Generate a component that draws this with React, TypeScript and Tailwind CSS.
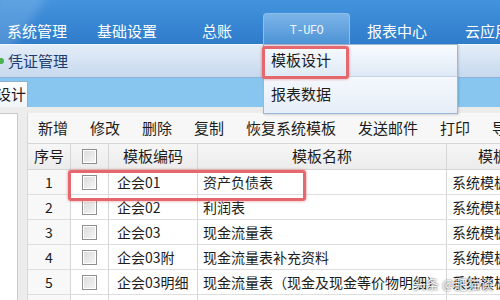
import React from 'react';

const navItems = [
  { label: '系统管理', ml: 'ml-[7px]' },
  { label: '基础设置', ml: 'ml-[30px]' },
  { label: '总账', ml: 'ml-[45px]' },
];

const tools = ['新增', '修改', '删除', '复制', '恢复系统模板', '发送邮件', '打印', '导出'];

const rows = [
  ['1', '企会01', '资产负债表', '系统模板'],
  ['2', '企会02', '利润表', '系统模板'],
  ['3', '企会03', '现金流量表', '系统模板'],
  ['4', '企会03附', '现金流量表补充资料', '系统模板'],
  ['5', '企会03明细', '现金流量表（现金及现金等价物明细）', '系统模板'],
  ['6', '企会04', '所有者权益变动表（新准则）', '系统模板'],
];

function CheckBox() {
  return (
    <div className="w-[15px] h-[15px] border border-[#8e8e8e] bg-white p-[1px]">
      <div className="w-full h-full bg-gradient-to-br from-[#dcdcdc] to-[#f4f4f4]" />
    </div>
  );
}

export default function App() {
  return (
    <div className="relative w-[500px] h-[300px] overflow-hidden bg-[#ececec] font-['Noto_Sans_CJK_SC','Microsoft_YaHei',sans-serif] text-[15px] text-[#1c1c1c]">
      {/* Top nav */}
      <div className="relative h-[44px] bg-gradient-to-b from-[#4393dd] to-[#2f7ccb] flex items-end overflow-hidden whitespace-nowrap">
        <div className="absolute -left-[10px] -top-[20px] w-[40px] h-[70px] rotate-[35deg] bg-white/15 blur-[4px]" />
        {navItems.map((n) => (
          <div key={n.label} className={`${n.ml} shrink-0 h-[32px] pt-[4px] flex items-center text-white leading-none`}>
            {n.label}
          </div>
        ))}
        <div className="ml-[31px] shrink-0 w-[87px] h-[31px] pt-[11px] rounded-t-[4px] border border-b-0 border-[#8cc0ec] bg-gradient-to-b from-[#7bb4e8] to-[#4d93d6] flex items-start justify-center">
          <span className="font-['Liberation_Mono',monospace] text-[12px] leading-none text-[#eef4fb] tracking-[-0.5px]">T-UFO</span>
        </div>
        <div className="ml-[17px] shrink-0 h-[32px] pt-[4px] flex items-center text-white leading-none">报表中心</div>
        <div className="ml-[38px] shrink-0 h-[32px] pt-[4px] flex items-center text-white leading-none">云应用</div>
      </div>

      {/* Module strip */}
      <div className="h-[34px] bg-gradient-to-b from-[#e4edf7] to-[#c6d9ee] border-t border-[#f2f7fc] border-b border-b-[#8fb0d4] flex items-center">
        <div className="w-[6px] h-[6px] shrink-0 rounded-full bg-[#4caf50] -ml-[2px]" />
        <span className="ml-[4px] text-[#1d3b6e]">凭证管理</span>
      </div>

      {/* Tab strip */}
      <div className="h-[29px] bg-[#88c6ef] flex items-end">
        <div className="w-[28px] h-[26px] bg-gradient-to-b from-white to-[#f1f5f9] border border-b-0 border-l-0 border-[#8fb2d2] flex items-center justify-end pr-[1px] overflow-hidden">
          <span className="whitespace-nowrap">设计</span>
        </div>
      </div>

      {/* Content */}
      <div className="flex pt-[6px] h-[193px]">
        <div className="w-[18px] shrink-0 bg-white border-t border-r border-[#c9c9c9]" />
        <div className="ml-[9px] flex-1 min-w-0 bg-white border-l border-[#d8d8d8] flex flex-col">
          {/* Toolbar */}
          <div className="h-[30px] shrink-0 bg-[#f7f7f7] flex items-center pl-[10px] gap-[22px] whitespace-nowrap">
            {tools.map((t) => (
              <span key={t} className="shrink-0">{t}</span>
            ))}
          </div>

          {/* Grid header */}
          <div className="grid shrink-0 grid-cols-[43px_38px_89px_249px_1fr] h-[27px] bg-gradient-to-b from-[#f6f6f6] to-[#ececec] border-t border-b border-[#d6d6d6]">
            <div className="flex items-center justify-center border-r border-[#d6d6d6]">序号</div>
            <div className="flex items-center justify-center border-r border-[#d6d6d6]">
              <CheckBox />
            </div>
            <div className="flex items-center justify-center border-r border-[#d6d6d6]">模板编码</div>
            <div className="flex items-center justify-center border-r border-[#d6d6d6]">模板名称</div>
            <div className="flex items-center pl-[31px] whitespace-nowrap overflow-hidden">模板类型</div>
          </div>

          {/* Rows */}
          {rows.map((r) => (
            <div
              key={r[0]}
              className="grid grid-cols-[43px_38px_89px_249px_1fr] h-[25px] shrink-0 border-b border-[#dedede] text-[14px]"
            >
              <div className="flex items-center justify-center border-r border-[#d6d6d6] bg-[#f8f8f8]">{r[0]}</div>
              <div className="flex items-center justify-center border-r border-[#d6d6d6]">
                <CheckBox />
              </div>
              <div className="flex items-center pl-[8px] border-r border-[#d6d6d6] whitespace-nowrap overflow-hidden">{r[1]}</div>
              <div className="flex items-center pl-[5px] border-r border-[#d6d6d6] whitespace-nowrap overflow-hidden">{r[2]}</div>
              <div className="flex items-center pl-[5px] whitespace-nowrap overflow-hidden">{r[3]}</div>
            </div>
          ))}
        </div>
      </div>

      {/* Dropdown menu */}
      <div className="absolute left-[263px] top-[44px] w-[195px] h-[70px] border border-[#9db7d6] bg-[#eef3f9] shadow-[1px_1px_2px_rgba(0,0,0,0.15)] flex flex-col">
        <div className="h-[32px] bg-gradient-to-b from-[#f8fbfe] to-[#dfeaf6] border-b border-[#c3d4e8] flex items-center pl-[7px]">模板设计</div>
        <div className="flex-1 pb-[2px] bg-gradient-to-b from-[#f4f8fc] to-[#e6eef8] flex items-center pl-[7px]">报表数据</div>
      </div>

      {/* Highlight boxes */}
      <div className="absolute left-[262px] top-[46px] w-[87px] h-[33px] border-[3px] border-[#e5686f] rounded-[3px] shadow-[0_0_3px_rgba(220,90,100,0.7)]" />
      <div className="absolute left-[68px] top-[170px] w-[238px] h-[31px] border-[3px] border-[#e5686f] rounded-[3px] shadow-[0_0_3px_rgba(220,90,100,0.7)]" />

      {/* Watermark */}
      <div className="absolute left-[413px] top-[274px] text-[13px] text-white/90 whitespace-nowrap [text-shadow:0_0_2px_rgba(0,0,0,0.8)]">
        头条 @肥猫谈
      </div>
    </div>
  );
}
